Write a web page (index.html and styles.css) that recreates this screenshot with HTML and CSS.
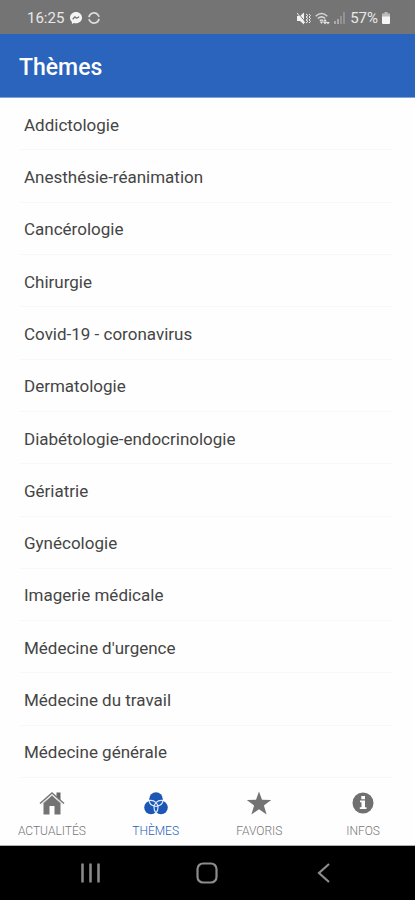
FILE: index.html
```html
<!DOCTYPE html>
<html lang="fr">
<head>
<meta charset="utf-8">
<meta name="viewport" content="width=device-width, initial-scale=1">
<title>Thèmes</title>
<link rel="stylesheet" href="styles.css">
</head>
<body>
<div class="status">
  <div class="status-group">
    <span>16:25</span>
    <svg width="12" height="12" viewBox="0 0 12 12" aria-hidden="true"><path fill="#f4f4f4" d="M6 0C2.600 0 0 2.500 0 5.700c0 1.700.7 3.100 1.900 4.100V12l2.100-1.100c.6.200 1.300.3 2 .3 3.400 0 6-2.400 6-5.500S9.400 0 6 0z"/><path d="M2.700 7.200l2.200-2.400 1.700 1.500 2.600-1.600" fill="none" stroke="#717171" stroke-width="1.300"/></svg>
    <svg width="12" height="12" viewBox="0 0 12 12" fill="none" stroke="#dedede" stroke-width="1.700" aria-hidden="true"><path d="M1 5.200a5 5 0 0 1 9.300-1.800l1 1.300M11 6.800a5 5 0 0 1-9.300 1.800l-1-1.300"/></svg>
  </div>
  <div class="status-group status-right">
    <svg width="14" height="13" viewBox="0 0 14 13" aria-hidden="true"><path fill="#f2f2f2" d="M0 4h3l4-3.500v12L3 9H0z"/><path d="M1 1l9 11" stroke="#757575" stroke-width="1"/><path d="M0 1l8 10M9 2l2 1.500L9 5l2 1.500L9 8l2 1.500L9 11M12 2l1.500 1.500L12 5l1.500 1.500L12 8l1.500 1.500L12 11" stroke="#ededed" fill="none"/></svg>
    <svg width="15" height="13" viewBox="0 0 15 13" aria-hidden="true"><path d="M.7 4.200c3.600-3.300 8-3.300 11.600 0M2.800 6.500c2.300-2 5.100-2 7.400 0M4.800 8.700c1.200-1 2.200-1 3.400 0" fill="none" stroke="#d5d5d5" stroke-width="1.500"/><path d="M6.500 12L4.800 9.500h3.400zM10 7l2 2.500H8zM10 12.500L8 10h4zM13 12.500L11.200 10h3.600z" fill="#e5e5e5"/></svg>
    <svg width="12" height="12" viewBox="0 0 12 12" aria-hidden="true"><path d="M0 9h2v3H0zM3 7h2v5H3z" fill="#aaa"/><path d="M6 4h2v8H6zM9 0h2v12H9z" fill="#929292"/></svg>
    <span class="battery-text">57%</span>
    <svg width="8" height="12" viewBox="0 0 8 12" aria-hidden="true"><path fill="#bdbdbd" d="M2.500 0h3v1.500H8V5H0V1.500h2.500z"/><path fill="#f5f5f5" d="M0 4.500h8V11a1 1 0 0 1-1 1H1a1 1 0 0 1-1-1z"/></svg>
  </div>
</div>
<header class="header"><h1>Thèmes</h1></header>
<main class="main">
  <ul class="list">
    <li><a href="#addictologie">Addictologie</a></li>
    <li><a href="#anesthesie">Anesthésie-réanimation</a></li>
    <li><a href="#cancerologie">Cancérologie</a></li>
    <li><a href="#chirurgie">Chirurgie</a></li>
    <li><a href="#covid">Covid-19 - coronavirus</a></li>
    <li><a href="#dermatologie">Dermatologie</a></li>
    <li><a href="#diabetologie">Diabétologie-endocrinologie</a></li>
    <li><a href="#geriatrie">Gériatrie</a></li>
    <li><a href="#gynecologie">Gynécologie</a></li>
    <li><a href="#imagerie">Imagerie médicale</a></li>
    <li><a href="#urgence">Médecine d'urgence</a></li>
    <li><a href="#travail">Médecine du travail</a></li>
    <li><a href="#generale">Médecine générale</a></li>
  </ul>
</main>
<nav class="tabs">
  <a href="#actualites">
    <svg width="26" height="26" viewBox="0 0 26 26" aria-hidden="true"><path d="M17.500 2.500h4v8l-4-4z" fill="#666"/><path d="M13 5.500L4.500 13v11.500h6V16h5v8.500h6V13z" fill="#737373"/><path d="M1 13.500L13 3l12 10.500" fill="none" stroke="#777" stroke-width="1.500"/><path d="M2.500 14.200L13 5l10.500 9.200" fill="none" stroke="#ddd" stroke-width="1"/></svg>
    <span>ACTUALITÉS</span>
  </a>
  <a href="#themes" class="active" aria-current="page">
    <svg width="26" height="26" viewBox="0 0 26 26" aria-hidden="true"><g fill="#1c57b5"><circle cx="13" cy="9" r="6.800"/><circle cx="8" cy="17.500" r="6.800"/><circle cx="18" cy="17.500" r="6.800"/></g><g fill="none" stroke="#dce9ff" stroke-width="1.200"><path d="M6 10.600c2.500-.5 5 .1 7 2 2-1.900 4.500-2.500 7-2M6 10.600c.6 3 2.400 4.800 5 5.400M20 10.600c-.6 3-2.400 4.800-5 5.400M11 17.500c0-2 .7-3.700 2-4.900 1.300 1.200 2 2.900 2 4.900 0 2.200-.7 4-2 5.400-1.300-1.400-2-3.200-2-5.400zM11 16c1.300.4 2.700.4 4 0"/></g></svg>
    <span>THÈMES</span>
  </a>
  <a href="#favoris">
    <svg width="26" height="26" viewBox="0 0 26 26" aria-hidden="true"><path fill="#737373" d="M13 1.500l3 8.300 9.200.2-7.300 5.500 2.700 9-7.600-5.300-7.600 5.300 2.700-9L.8 10l9.200-.2z"/></svg>
    <span>FAVORIS</span>
  </a>
  <a href="#infos">
    <svg width="26" height="26" viewBox="0 0 26 26" aria-hidden="true"><circle cx="13" cy="13" r="10.500" fill="#707070"/><path fill="#fff" d="M11.300 6h3.700v3.200h-3.700zM10 10.500h5v6.800h1.500V19H9.800v-1.700h1.700v-5H10z"/></svg>
    <span>INFOS</span>
  </a>
</nav>
<div class="system">
  <button type="button" aria-label="Applications récentes"><svg width="24" height="24" viewBox="0 0 24 24"><path d="M3.500 2.500v19M11.500 2.500v19M19.500 2.500v19" stroke="#8c8c8c" stroke-width="2.500"/></svg></button>
  <button type="button" aria-label="Accueil"><svg width="24" height="24" viewBox="0 0 24 24"><rect x="2.500" y="2.500" width="19" height="19" rx="5.500" fill="none" stroke="#8c8c8c" stroke-width="2.200"/></svg></button>
  <button type="button" aria-label="Retour"><svg width="24" height="24" viewBox="0 0 24 24"><path d="M17 3L7 12l10 9" fill="none" stroke="#8c8c8c" stroke-width="2.200"/></svg></button>
</div>
</body>
</html>
```
FILE: styles.css
```css
* {
  box-sizing: border-box;
}

body {
  margin: 0;
  min-height: 100vh;
  display: flex;
  flex-direction: column;
  background: #fefefe;
  color: #454545;
  font-family: Roboto, "Liberation Sans", sans-serif;
}

a {
  color: inherit;
  text-decoration: none;
}

svg {
  display: block;
}

.status {
  height: 34px;
  padding: 2px 25px 0 27px;
  display: flex;
  align-items: center;
  justify-content: space-between;
  background: #747474;
  color: #e8e8e8;
  font-size: 15px;
}

.status-group {
  display: flex;
  align-items: center;
  gap: 6px;
}

.status-right {
  gap: 4px;
}

.header {
  height: 64px;
  padding: 0 19px;
  display: flex;
  align-items: center;
  background: #2a64bc;
  border-bottom: 1px solid #7fa3d8;
  color: #fff;
}

h1 {
  margin: 0;
  padding-top: 4px;
  font-size: 23px;
  font-weight: 500;
}

.main {
  flex: 1;
  display: flex;
}

.list {
  flex: 1;
  margin: 0;
  padding: 0;
  display: flex;
  flex-direction: column;
  list-style: none;
  font-size: 17px;
}

.list li {
  flex: 1;
  display: flex;
  margin: 0 24px 0 20px;
  border-bottom: 1px solid #f7f7f7;
}

.list a {
  flex: 1;
  display: flex;
  align-items: center;
  min-height: 48px;
  padding: 2px 0 0 4px;
}

.tabs {
  height: 68px;
  display: grid;
  grid-template-columns: repeat(4, 1fr);
  border-bottom: 1px solid #b0b0b0;
  color: #777;
  font-size: 12px;
  font-weight: 300;
}

.tabs a {
  display: flex;
  flex-direction: column;
  align-items: center;
  gap: 8px;
  padding-top: 12px;
}

.tabs .active {
  color: #2a5fb8;
}

.system {
  height: 54px;
  padding: 0 33px;
  display: grid;
  grid-template-columns: repeat(3, 1fr);
  background: #000;
}

.system button {
  display: flex;
  align-items: center;
  justify-content: center;
  padding: 0;
  border: 0;
  background: none;
}
```
